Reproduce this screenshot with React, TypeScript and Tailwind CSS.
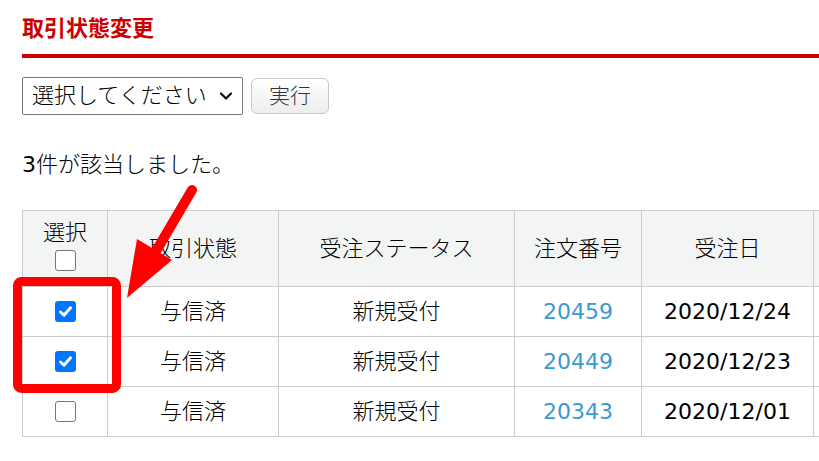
import React from 'react';

const rows = [
  { checked: true, state: '与信済', status: '新規受付', no: '20459', date: '2020/12/24' },
  { checked: true, state: '与信済', status: '新規受付', no: '20449', date: '2020/12/23' },
  { checked: false, state: '与信済', status: '新規受付', no: '20343', date: '2020/12/01' },
];

const font = { fontFamily: '"DejaVu Sans", "Noto Sans CJK JP", sans-serif' };

function Box({ checked }: { checked: boolean }) {
  if (checked) {
    return (
      <span className="flex h-[21px] w-[21px] shrink-0 items-center justify-center rounded-[3px] bg-[#0075ff]">
        <svg width="17" height="17" viewBox="0 0 17 17" fill="none">
          <path d="M3.5 9L7 12.2L13.5 4.8" stroke="white" strokeWidth="3" strokeLinecap="round" strokeLinejoin="round" />
        </svg>
      </span>
    );
  }
  return <span className="block h-[21px] w-[21px] shrink-0 rounded-[3px] border-[1.5px] border-[#767676] bg-white" />;
}

export default function App() {
  return (
    <div className="relative h-[461px] w-[819px] overflow-hidden bg-white text-black" style={font}>
      <div className="pl-[22px] pt-[14px]">
        <h1 className="text-[22px] font-bold leading-[30px] text-[#cc0000]">取引状態変更</h1>
        <div className="mt-[10px] h-[4px] bg-[#cc0000]" />

        {/* bulk action */}
        <div className="mt-[19px] flex items-center gap-[8px]">
          <div className="flex h-[38px] w-[221px] items-center justify-between rounded-[2px] border border-[#767676] pl-[9px] pr-[8px]">
            <span className="text-[22px] font-light leading-none">選択してください</span>
            <svg width="16" height="16" viewBox="0 0 16 16" fill="none">
              <path d="M3 5.5L8 10.5L13 5.5" stroke="#111" strokeWidth="2.2" strokeLinecap="round" strokeLinejoin="round" />
            </svg>
          </div>
          <button className="h-[36px] w-[78px] rounded-[6px] border border-[#c8c8c8] bg-gradient-to-b from-white to-[#ededed] text-[21px] font-light leading-none text-[#333]">
            実行
          </button>
        </div>

        <p className="mt-[35px] text-[22px] font-light leading-[30px]">
          <span className="font-normal">3</span>件が該当しました。
        </p>

        <table className="mt-[30px] w-[900px] table-fixed border-collapse text-[22px] font-light">
          <colgroup>
            <col className="w-[85px]" />
            <col className="w-[171px]" />
            <col className="w-[236px]" />
            <col className="w-[127px]" />
            <col className="w-[172px]" />
            <col />
          </colgroup>
          <thead>
            <tr className="h-[76px] bg-[#f3f4f4]">
              <th className="border border-[#cccccc] font-light">
                <div className="flex flex-col items-center pb-[8px]">
                  <span className="leading-[28px]">選択</span>
                  <span className="mt-[3px] flex"><Box checked={false} /></span>
                </div>
              </th>
              <th className="border border-[#cccccc] font-light">取引状態</th>
              <th className="border border-[#cccccc] font-light">受注ステータス</th>
              <th className="border border-[#cccccc] font-light">注文番号</th>
              <th className="border border-[#cccccc] font-light">受注日</th>
              <th className="border border-[#cccccc] font-light"></th>
            </tr>
          </thead>
          <tbody>
            {rows.map((r) => (
              <tr key={r.no} className="h-[50px]">
                <td className="border border-[#cccccc] text-center">
                  <span className="flex justify-center"><Box checked={r.checked} /></span>
                </td>
                <td className="border border-[#cccccc] text-center">{r.state}</td>
                <td className="border border-[#cccccc] text-center">{r.status}</td>
                <td className="border border-[#cccccc] text-center font-normal text-[#3a99d4]">{r.no}</td>
                <td className="border border-[#cccccc] text-center font-normal">{r.date}</td>
                <td className="border border-[#cccccc]"></td>
              </tr>
            ))}
          </tbody>
        </table>
      </div>

      {/* annotation overlay */}
      <svg className="pointer-events-none absolute left-0 top-0" width="819" height="461" viewBox="0 0 819 461">
        <rect x="17.5" y="281.5" width="99" height="107" rx="4" fill="none" stroke="#ff0000" strokeWidth="9" />
        <line x1="192" y1="190" x2="152" y2="258" stroke="#ff0000" strokeWidth="10" strokeLinecap="round" />
        <polygon points="127,298 137,239 172,260" fill="#ff0000" />
      </svg>
    </div>
  );
}
